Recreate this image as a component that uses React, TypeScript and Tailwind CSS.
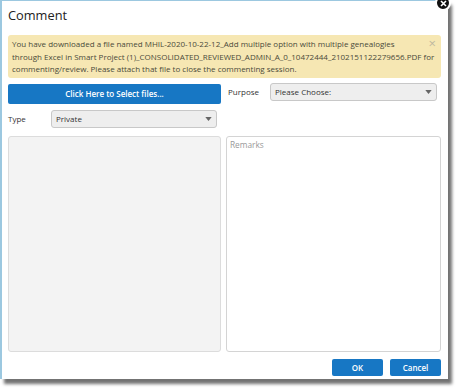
import React from "react";

function Caret() {
  return (
    <svg width="7" height="4" viewBox="0 0 8 5" className="shrink-0">
      <path d="M0 0 L8 0 L4 5 Z" fill="#666" />
    </svg>
  );
}

export default function App() {
  return (
    <div
      className="relative w-[460px] h-[392px] bg-white overflow-hidden"
      style={{ fontFamily: '"Open Sans", "Noto Sans", sans-serif' }}
    >
      <div className="relative w-[448px] h-[379px] bg-white border-l-2 border-t border-[#9cc8e0] shadow-[4px_5px_3px_rgba(0,0,0,0.55)] flex flex-col px-[6px]">
        <div className="h-[34px] flex items-center pb-[5px]">
          <span className="text-[12.8px] text-[#222] leading-none">Comment</span>
        </div>
        <div className="relative w-[433px] h-[43px] bg-[#f6e7b3] rounded-[3px] pl-[4px] pt-[3px] text-[8px] leading-[12.5px] text-[#4a4a3a] whitespace-nowrap">
          You have downloaded a file named MHIL-2020-10-22-12_Add multiple option with multiple genealogies
          <br />
          through Excel in Smart Project (1)_CONSOLIDATED_REVIEWED_ADMIN_A_0_10472444_2102151122279656.PDF for
          <br />
          commenting/review. Please attach that file to close the commenting session.
          <span className="absolute right-[5px] top-[2px] text-[13px] leading-none text-[#bdb8a0]">×</span>
        </div>
        <div className="flex mt-[6px] items-start">
          <div className="flex flex-col w-[213px]">
            <div className="h-[20px] bg-[#1777c4] rounded-[2px] flex items-center justify-center text-white text-[8px] font-semibold">
              Click Here to Select files...
            </div>
            <div className="flex items-center mt-[6px] h-[18px]">
              <span className="w-[43px] text-[8px] text-[#333]">Type</span>
              <div className="w-[166px] h-[18px] bg-[#eeeeee] border border-[#c8c8c8] rounded-[3px] flex items-center justify-between px-[4px] text-[8px] text-[#333]">
                <span>Private</span>
                <Caret />
              </div>
            </div>
          </div>
          <div className="flex items-center ml-[7px] h-[18px] mt-[-1px]">
            <span className="w-[42px] text-[8px] text-[#333]">Purpose</span>
            <div className="w-[167px] h-[18px] bg-[#eeeeee] border border-[#c8c8c8] rounded-[3px] flex items-center justify-between px-[4px] text-[8px] text-[#333]">
              <span>Please Choose:</span>
              <Caret />
            </div>
          </div>
        </div>
        <div className="flex mt-[8px] gap-[5px]">
          <div className="w-[213px] h-[216px] bg-[#f3f3f3] border border-[#dcdcdc] rounded-[3px]" />
          <div className="w-[215px] h-[216px] bg-white border border-[#d4d4d4] rounded-[3px] px-[3px] pt-[2px] text-[8.3px] text-[#999]">
            Remarks
          </div>
        </div>
        <div className="flex justify-end gap-[7px] mt-[7px] w-[433px]">
          <div className="w-[51px] h-[17px] bg-[#1777c4] rounded-[2px] flex items-center justify-center text-white text-[8px] font-semibold">
            OK
          </div>
          <div className="w-[51px] h-[17px] bg-[#1777c4] rounded-[2px] flex items-center justify-center text-white text-[8px] font-semibold">
            Cancel
          </div>
        </div>
      </div>
      <div className="absolute left-[435px] top-[-5px] w-[16px] h-[16px] rounded-full bg-[#111] border-2 border-white flex items-center justify-center">
        <svg width="7" height="7" viewBox="0 0 7 7">
          <path d="M1 1 L6 6 M6 1 L1 6" stroke="white" strokeWidth="1.6" />
        </svg>
      </div>
    </div>
  );
}
